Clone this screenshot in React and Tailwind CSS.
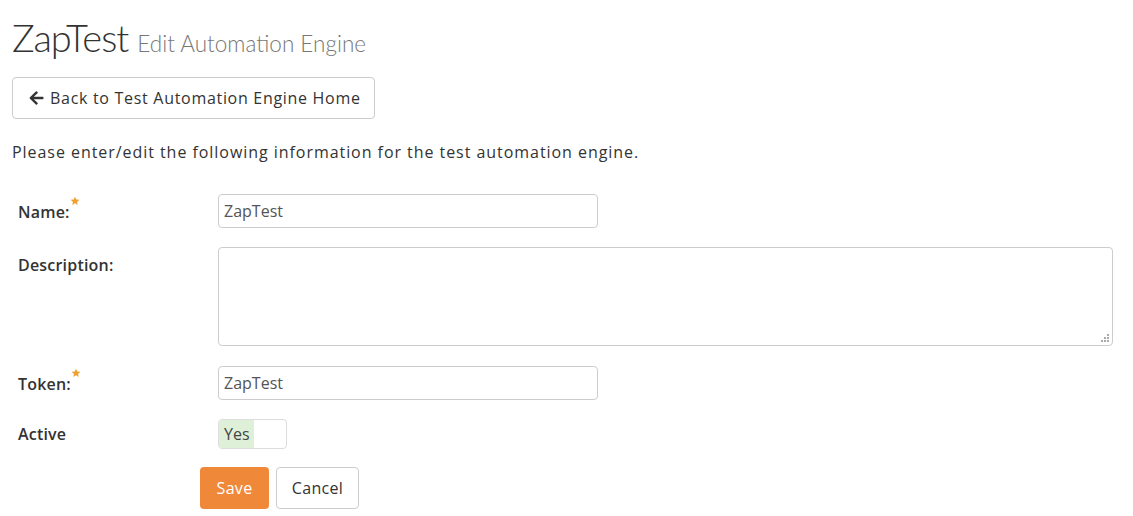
import React from "react";

function Star() {
  return (
    <svg viewBox="0 0 24 24" className="absolute -right-[10px] -top-[5px] w-[10px] h-[10px]" fill="#f0a030">
      <path d="M12 1.5l3.1 6.9 7.4.7-5.6 5 1.7 7.4L12 17.6l-6.6 3.9 1.7-7.4-5.6-5 7.4-.7z" />
    </svg>
  );
}

function Label({ children, required }) {
  return (
    <div className="w-[206px] shrink-0 pl-[6px] pt-[6px] text-[16px] font-semibold text-[#333] tracking-[0.2px]">
      <span className="relative">
        {children}
        {required && <Star />}
      </span>
    </div>
  );
}

export default function App() {
  return (
    <div className="bg-white min-h-[516px] px-[12px] text-[#333]" style={{ fontFamily: '"Open Sans", "Noto Sans", sans-serif' }}>
      <h1 className="pt-[18px] flex items-baseline gap-[9px] leading-none">
        <span className="text-[38px] text-[#333] font-light tracking-[-1px]" style={{ fontFamily: 'Lato, sans-serif' }}>ZapTest</span>
        <span className="text-[22.5px] text-[#777] font-light" style={{ fontFamily: 'Lato, sans-serif' }}>Edit Automation Engine</span>
      </h1>

      <button className="mt-[21px] h-[42px] w-[363px] flex items-center gap-[6px] pl-[16px] border border-[#ccc] rounded-[4px] bg-white text-[16px] text-[#333] tracking-[0.7px]">
        <svg viewBox="0 0 448 512" className="w-[15px] h-[16px]" fill="#333">
          <path d="M257.5 445.1l-22.2 22.2c-9.4 9.4-24.6 9.4-33.9 0L7 273c-9.4-9.4-9.4-24.6 0-33.9L201.4 44.7c9.4-9.4 24.6-9.4 33.9 0l22.2 22.2c9.5 9.5 9.3 25-.4 34.3L136.6 216H424c13.3 0 24 10.7 24 24v32c0 13.3-10.7 24-24 24H136.6l120.5 114.8c9.8 9.3 10 24.8.4 34.3z" />
        </svg>
        Back to Test Automation Engine Home
      </button>

      <p className="mt-[22px] text-[16px] leading-[22px] text-[#333] tracking-[0.95px]">
        Please enter/edit the following information for the test automation engine.
      </p>

      <div className="mt-[31px] flex flex-col">
        <div className="flex">
          <Label required>Name:</Label>
          <input defaultValue="ZapTest" className="w-[380px] h-[34px] border border-[#ccc] rounded-[4px] px-[5px] text-[16px] text-[#555] outline-none" />
        </div>

        <div className="flex mt-[19px]">
          <Label>Description:</Label>
          <div className="relative">
            <textarea className="block w-[895px] h-[99px] border border-[#ccc] rounded-[4px] px-[5px] text-[16px] outline-none resize-none" />
            <svg viewBox="0 0 9 9" className="absolute right-[3px] bottom-[3px] w-[9px] h-[9px]" fill="#aaa">
              <rect x="6" y="0" width="2" height="2" />
              <rect x="3" y="3" width="2" height="2" />
              <rect x="6" y="3" width="2" height="2" />
              <rect x="0" y="6" width="2" height="2" />
              <rect x="3" y="6" width="2" height="2" />
              <rect x="6" y="6" width="2" height="2" />
            </svg>
          </div>
        </div>

        <div className="flex mt-[20px]">
          <Label required>Token:</Label>
          <input defaultValue="ZapTest" className="w-[380px] h-[34px] border border-[#ccc] rounded-[4px] px-[5px] text-[16px] text-[#555] outline-none" />
        </div>

        <div className="flex mt-[19px] items-center">
          <div className="w-[206px] shrink-0 pl-[6px] text-[16px] font-semibold text-[#333] tracking-[0.2px]">Active</div>
          <div className="w-[69px] h-[30px] border border-[#ddd] rounded-[4px] flex overflow-hidden">
            <div className="w-[35px] bg-[#dff0d8] text-[16px] text-[#444] flex items-center pl-[5px]">Yes</div>
          </div>
        </div>

        <div className="flex mt-[18px] ml-[188px] gap-[7px]">
          <button className="h-[42px] w-[69px] rounded-[4px] bg-[#f0883a] text-white text-[16px] tracking-[0.3px]">Save</button>
          <button className="h-[42px] w-[83px] rounded-[4px] border border-[#ccc] bg-white text-[#333] text-[16px] tracking-[0.3px]">Cancel</button>
        </div>
      </div>
    </div>
  );
}
